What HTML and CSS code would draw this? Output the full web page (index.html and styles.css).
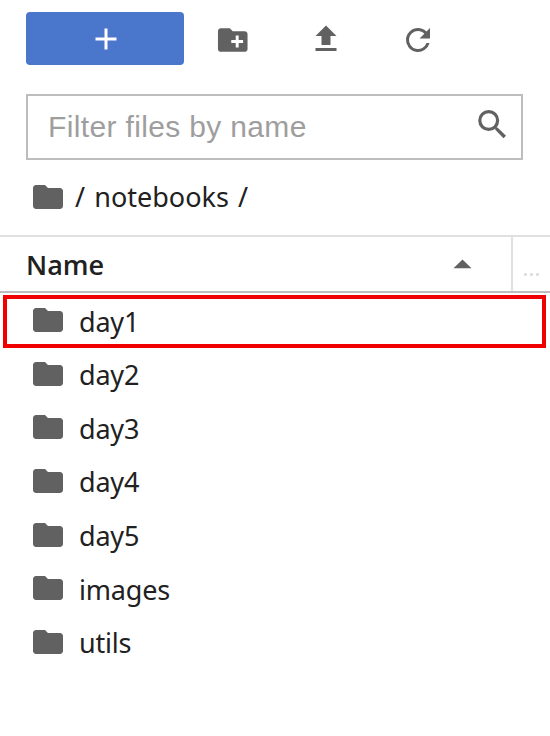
FILE: index.html
```html
<!DOCTYPE html>
<html lang="en">
<head>
<meta charset="utf-8">
<title>Files</title>
<link rel="stylesheet" href="styles.css">
</head>
<body>
<svg width="0" height="0" class="defs"><symbol id="folder" viewBox="0 0 24 24"><path d="M10 4H4c-1.1 0-1.99.9-1.99 2L2 18c0 1.1.9 2 2 2h16c1.1 0 2-.9 2-2V8c0-1.1-.9-2-2-2h-8l-2-2z"/></symbol></svg>
<div class="toolbar">
  <button class="new" aria-label="New"><svg class="icon" viewBox="0 0 24 24"><path d="M19 13h-6v6h-2v-6H5v-2h6V5h2v6h6z"/></svg></button>
  <svg class="icon new-folder" viewBox="0 0 24 24"><path d="M20 6h-8l-2-2H4c-1.11 0-1.99.89-1.99 2L2 18c0 1.11.89 2 2 2h16c1.11 0 2-.89 2-2V8c0-1.11-.89-2-2-2zm-1 8h-3v3h-2v-3h-3v-2h3V9h2v3h3v2z"/></svg>
  <svg class="icon upload" viewBox="0 0 24 24"><path d="M9 16h6v-6h4l-7-7-7 7h4zm-4 2h14v2H5z"/></svg>
  <svg class="icon refresh" viewBox="0 0 24 24"><path d="M17.65 6.35A7.958 7.958 0 0 0 12 4a8 8 0 1 0 7.73 10h-2.08A6 6 0 1 1 12 6c1.66 0 3.14.69 4.22 1.78L13 11h7V4l-2.35 2.35z"/></svg>
</div>
<div class="filter">
  <span class="placeholder">Filter files by name</span>
  <svg class="icon" viewBox="0 0 36 36"><circle cx="14.7" cy="14.5" r="8.9" fill="none" stroke="#616161" stroke-width="3.2"/><path d="M21 21l2.500.6 8.500 8.200-2.500 2.500-8.200-8.500z"/></svg>
</div>
<div class="crumbs"><svg class="icon"><use href="#folder"/></svg><span class="path">/ notebooks /</span></div>
<div class="header">
  <div class="name"><span>Name</span><svg class="caret" viewBox="0 0 20 10"><path d="M.5 9.500L10 .2l9.500 9.300z"/></svg></div>
  <div class="more"><i></i><i></i><i></i></div>
</div>
<div class="list">
  <div class="row marked"><svg class="icon"><use href="#folder"/></svg><span>day1</span></div>
  <div class="row"><svg class="icon"><use href="#folder"/></svg><span>day2</span></div>
  <div class="row"><svg class="icon"><use href="#folder"/></svg><span>day3</span></div>
  <div class="row"><svg class="icon"><use href="#folder"/></svg><span>day4</span></div>
  <div class="row"><svg class="icon"><use href="#folder"/></svg><span>day5</span></div>
  <div class="row"><svg class="icon"><use href="#folder"/></svg><span>images</span></div>
  <div class="row"><svg class="icon"><use href="#folder"/></svg><span>utils</span></div>
</div>
</body>
</html>
```
FILE: styles.css
```css
*, *::after { box-sizing: border-box; }
body { margin: 0; height: 736px; overflow: hidden; background: #fff; color: #212121; font: 27px "Noto Sans", "Open Sans", sans-serif; }
.defs { display: block; }
.icon { width: 36px; height: 36px; fill: #616161; flex: none; display: block; }
.toolbar { display: flex; align-items: center; height: 53px; margin: 12px 0 0 26px; }
.new { width: 158px; height: 53px; padding: 0; border: 0; border-radius: 4px; background: #4a77cc; display: flex; align-items: center; justify-content: center; }
.new .icon { fill: #fff; margin: 1px 0 0 1px; }
.new-folder { margin-left: 30.500px; width: 35.500px; margin-top: 2px; }
.upload { margin-left: 57.500px; margin-top: 1px; }
.refresh { margin-left: 56px; margin-top: 2px; }
.filter { display: flex; align-items: center; justify-content: space-between; width: 497px; height: 66px; margin: 29px 0 0 26px; padding: 0 11px 0 20px; border: 2px solid #bdbdbd; color: #9e9e9e; font: 30px "Liberation Sans", sans-serif; }
.filter .icon { margin-top: -6px; }
.placeholder { letter-spacing: .35px; }
.crumbs { display: flex; align-items: center; height: 75px; padding-left: 30px; }
.crumbs .icon { margin-top: -1px; }
.path { margin: -3px 0 0 9px; word-spacing: 2.200px; }
.header { display: flex; height: 58px; border-top: 2px solid #e0e0e0; border-bottom: 2px solid #bdbdbd; }
.name { width: 511px; padding: 0 39px 0 26px; display: flex; align-items: center; justify-content: space-between; font-family: "Open Sans", "Noto Sans", sans-serif; font-weight: 600; }
.name span { margin-top: 1px; }
.caret { width: 19px; height: 10px; fill: #616161; }
.more { flex: 1; border-left: 2px solid #e0e0e0; display: flex; gap: 3px; padding: 36px 0 0 11px; }
.more i { width: 3px; height: 3px; background: #ddd; border-radius: 1px; }
.list { position: relative; padding-top: .4px; }
.row { display: flex; align-items: center; height: 53.600px; padding-left: 30px; }
.row span { margin: 2px 0 0 13px; letter-spacing: -.2px; }
.marked::after { content: ""; position: absolute; left: 3px; top: 2px; width: 543px; height: 53px; border: 4px solid #f00000; }
```
